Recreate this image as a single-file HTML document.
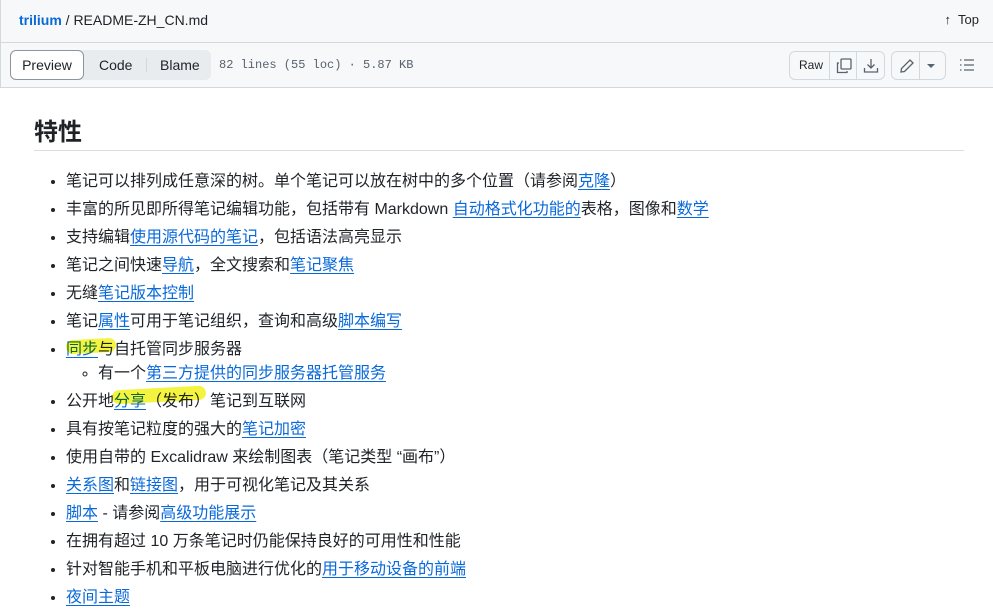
<!DOCTYPE html>
<html><head><meta charset="utf-8"><style>
*{box-sizing:border-box;margin:0;padding:0}
body{width:993px;height:599px;overflow:hidden;background:#fff;font-family:"Liberation Sans","Noto Sans CJK SC",sans-serif;color:#1f2328;position:relative}
.hdr{position:absolute;left:0;top:0;width:993px;height:43px;background:#f6f8fa;border-bottom:1px solid #d1d9e0;border-left:1px solid #d1d9e0}
.hdr .p{position:absolute;left:18px;top:12px;font-size:14px}
.hdr .p b{color:#0969da;font-weight:600}
.top{position:absolute;right:14px;top:12px;font-size:13px}
.tb{position:absolute;left:0;top:43px;width:993px;height:45px;background:#f6f8fa;border-bottom:1px solid #d1d9e0;border-left:1px solid #d1d9e0}
.seg{position:absolute;left:9px;top:7px;height:30px;width:201px;background:#e9ecef;border-radius:6px}
.seg .pv{position:absolute;left:0;top:0;width:74px;height:30px;background:#fff;border:1px solid #8c959f;border-radius:6px;font-size:14px;text-align:center;line-height:28px}
.seg span{position:absolute;top:7px;font-size:14px}
.meta{position:absolute;left:218px;top:15px;font:12px "Liberation Mono",monospace;color:#59636e}
.btn{position:absolute;top:8px;height:29px;border:1px solid #d1d9e0;border-radius:6px;background:#f6f8fa}
.btn i{position:absolute;top:0;bottom:0;width:1px;background:#d1d9e0}
.c{position:absolute;left:34px;top:112px;width:930px}
h2{font-size:24px;font-weight:700;padding-bottom:8px;border-bottom:1px solid #d8dee4;height:39px}
ul{list-style:disc;margin-top:17px;padding-left:32px;font-size:16px}
li{height:28px;line-height:28px}
ul ul{list-style:circle;margin:-4px 0 0;padding-left:32px}
a{color:#0969da;text-decoration:underline;text-underline-offset:3px}
.hl{position:absolute;background:#f0f000;opacity:.75;border-radius:8px;z-index:5;mix-blend-mode:multiply}
</style></head><body>
<div class="hdr"><div class="p"><b>trilium</b> / README-ZH_CN.md</div><div class="top">↑&nbsp; Top</div></div>
<div class="tb">
<div class="seg"><div class="pv">Preview</div><span style="left:89px">Code</span><i style="position:absolute;left:136px;top:8px;width:1px;height:14px;background:#d1d9e0"></i><span style="left:150px">Blame</span></div>
<div class="meta">82 lines (55 loc) · 5.87 KB</div>
<div class="btn" style="left:788px;width:96px"><span style="position:absolute;left:9px;top:6px;font-size:12px">Raw</span><i style="left:39px"></i><i style="left:66px"></i>
<svg style="position:absolute;left:46px;top:6px" width="16" height="16" fill="none" stroke="#59636e" stroke-width="1.3"><rect x="5" y="1" width="10" height="10" rx="1"/><path d="M3 5H1.5v9.5H11V13"/></svg>
<svg style="position:absolute;left:73px;top:6px" width="16" height="16" fill="none" stroke="#59636e" stroke-width="1.3"><path d="M8 1v9M4.5 6.5 8 10l3.5-3.5M1.5 10v4h13v-4"/></svg></div>
<div class="btn" style="left:890px;width:55px"><i style="left:27px"></i>
<svg style="position:absolute;left:7px;top:6px" width="16" height="16" fill="none" stroke="#59636e" stroke-width="1.3"><path d="M11 2l3 3-8.5 8.5L2 14l.5-3.5z"/></svg>
<svg style="position:absolute;left:35px;top:12px" width="8" height="5"><path d="M0 0h8L4 4z" fill="#59636e"/></svg></div>
<svg style="position:absolute;left:958px;top:14px" width="16" height="16" fill="none" stroke="#59636e" stroke-width="1.3"><path d="M5 3h10M5 8h10M5 13h10M1 3h1.5M1 8h1.5M1 13h1.5"/></svg>
</div>
<div class="hl" style="left:66px;top:339px;width:50px;height:14px;transform:rotate(-3deg)"></div>
<div class="hl" style="left:112px;top:388px;width:94px;height:14px;transform:rotate(-3deg)"></div>
<div class="c">
<h2>特性</h2>
<ul>
<li>笔记可以排列成任意深的树。单个笔记可以放在树中的多个位置（请参阅<a>克隆</a>）</li>
<li>丰富的所见即所得笔记编辑功能，包括带有 Markdown <a>自动格式化功能的</a>表格，图像和<a>数学</a></li>
<li>支持编辑<a>使用源代码的笔记</a>，包括语法高亮显示</li>
<li>笔记之间快速<a>导航</a>，全文搜索和<a>笔记聚焦</a></li>
<li>无缝<a>笔记版本控制</a></li>
<li>笔记<a>属性</a>可用于笔记组织，查询和高级<a>脚本编写</a></li>
<li><a>同步</a>与自托管同步服务器<ul><li>有一个<a>第三方提供的同步服务器托管服务</a></li></ul></li>
<li style="margin-top:24px">公开地<a>分享</a>（发布）笔记到互联网</li>
<li>具有按笔记粒度的强大的<a>笔记加密</a></li>
<li>使用自带的 Excalidraw 来绘制图表（笔记类型 “画布”）</li>
<li><a>关系图</a>和<a>链接图</a>，用于可视化笔记及其关系</li>
<li><a>脚本</a> - 请参阅<a>高级功能展示</a></li>
<li>在拥有超过 10 万条笔记时仍能保持良好的可用性和性能</li>
<li>针对智能手机和平板电脑进行优化的<a>用于移动设备的前端</a></li>
<li><a>夜间主题</a></li>
</ul></div>
</body></html>
